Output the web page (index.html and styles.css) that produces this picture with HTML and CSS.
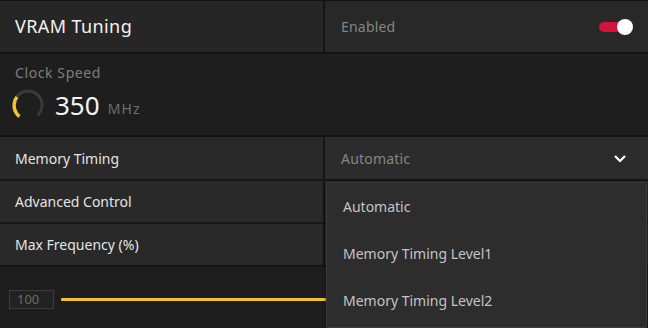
FILE: index.html
```html
<!DOCTYPE html>
<html>
<head>
<meta charset="utf-8">
<link rel="stylesheet" href="styles.css">
</head>
<body>
<div class="panel">
  <div class="row header">
    <div class="cell left"><span class="title">VRAM Tuning</span></div>
    <div class="cell right">
      <span class="muted">Enabled</span>
      <span class="toggle"><span class="knob"></span></span>
    </div>
  </div>
  <div class="clock">
    <div class="label">Clock Speed</div>
    <div class="value">
      <svg class="gauge" width="34" height="34" viewBox="0 0 34 34">
        <circle cx="17" cy="17" r="14" fill="none" stroke="#3a3a3a" stroke-width="3" stroke-dasharray="66 100" transform="rotate(135 17 17)"/>
        <path d="M8.5 28.5 A14 14 0 0 1 6 9" fill="none" stroke="#f2c230" stroke-width="3.5" stroke-linecap="butt"/>
      </svg>
      <span class="num">350</span><span class="unit">MHz</span>
    </div>
  </div>
  <div class="row item">
    <div class="cell left">Memory Timing</div>
    <div class="cell right select">
      <span class="muted">Automatic</span>
      <svg class="chev" width="14" height="9" viewBox="0 0 14 9"><path d="M2 2 L7 7 L12 2" fill="none" stroke="#fff" stroke-width="2.2"/></svg>
    </div>
  </div>
  <div class="row item short">
    <div class="cell left">Advanced Control</div>
    <div class="cell right empty"></div>
  </div>
  <div class="row item short">
    <div class="cell left">Max Frequency (%)</div>
    <div class="cell right empty"></div>
  </div>
  <div class="slider-area">
    <div class="numbox">100</div>
    <div class="track"></div>
  </div>
  <div class="dropdown">
    <div class="opt">Automatic</div>
    <div class="opt">Memory Timing Level1</div>
    <div class="opt">Memory Timing Level2</div>
  </div>
</div>
</body>
</html>
```
FILE: styles.css
```css
* { box-sizing: border-box; }
html, body { margin: 0; padding: 0; background: #1e1e1e; }
body {
  width: 648px; height: 328px; overflow: hidden;
  font-family: "Noto Sans", "Open Sans", sans-serif;
  color: #e6e6e6;
}
.panel {
  position: relative;
  width: 648px; height: 328px;
  background: #1e1e1e;
  border-top: 1px solid #141414;
  display: flex; flex-direction: column;
}
.row { display: flex; }
.cell { display: flex; align-items: center; }
.left { width: 325px; padding-left: 15px; border-right: 2px solid #161616; }
.right { flex: 1; padding-left: 16px; padding-right: 16px; justify-content: space-between; }
.header { height: 53px; border-bottom: 2px solid #141414; background: #262626; }
.header .left { background: #262626; }
.header .right { background: #282828; }
.title { font-size: 18px; color: #f2f2f2; letter-spacing: 0.4px; margin-top: -1px; }
.muted { font-size: 14px; color: #858585; letter-spacing: 0.2px; }
.toggle {
  position: relative; width: 32px; height: 10px; border-radius: 5px;
  background: #d3123b; margin-right: 1px;
}
.knob {
  position: absolute; right: -2px; top: -3px; width: 16px; height: 16px;
  border-radius: 50%; background: #fff;
}
.clock { height: 83px; padding: 9px 0 0 15px; border-bottom: 2px solid #141414; }
.clock .label { font-size: 14px; color: #7e7e7e; letter-spacing: 0.6px; }
.value { display: flex; align-items: center; margin-top: 6px; margin-left: -4px; }
.gauge { display: block; }
.num { font-size: 26px; color: #f4f4f4; margin-left: 10px; line-height: 30px; letter-spacing: 0; }
.unit { font-size: 14px; color: #6e6e6e; margin-left: 8px; margin-top: 6px; letter-spacing: 1.2px; }
.item { height: 44px; border-bottom: 2px solid #161616; font-size: 14px; color: #e4e4e4; }
.item.short { height: 43px; }
.item .left { background: #292929; }
.item .right.select { background: #2c2c2c; }
.item .right.empty { background: #292929; }
.chev { margin-right: 5px; }
.slider-area {
  flex: 1; display: flex; align-items: center; padding-left: 9px; padding-top: 4px;
}
.numbox {
  width: 45px; height: 19px; border: 1px solid #3c3c3c; background: #222;
  font-size: 13px; color: #6a6a6a; padding-left: 7px; line-height: 17px;
}
.track { width: 265px; height: 3px; background: #f2c230; margin-left: 7px; border-radius: 1px; }
.dropdown {
  position: absolute; left: 326px; top: 181px; width: 321px; height: 146px;
  background: #2d2d2d; border: 1px solid #3c3c3c; border-radius: 2px;
  display: flex; flex-direction: column; padding-bottom: 3px;
  box-shadow: 0 2px 4px rgba(0,0,0,0.4);
}
.opt { flex: 1; display: flex; align-items: center; padding-left: 16px; font-size: 14px; color: #c4c4c4; }
```
